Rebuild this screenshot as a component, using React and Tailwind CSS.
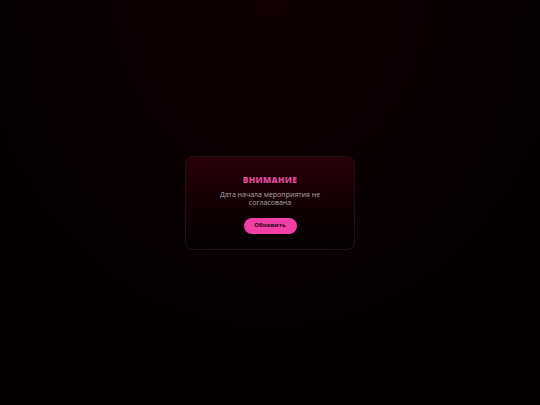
import React from 'react';

const App = () => {
  return (
    <div
      className="w-[540px] h-[405px] flex items-center justify-center bg-[radial-gradient(ellipse_60%_90%_at_50%_0%,#120003_0%,#0a0002_50%,#030001_100%)]"
      style={{ fontFamily: '"Open Sans", "DejaVu Sans", sans-serif' }}
    >
      {/* Alert card */}
      <div className="w-[170px] h-[94px] rounded-[8px] border border-[#1d1317] bg-gradient-to-b from-[#260007] to-[#040001] flex flex-col items-center pt-[17px]">
        <h2 className="text-[8.5px] leading-[11px] font-extrabold tracking-[0.3px] text-[#e0489a]">
          ВНИМАНИЕ
        </h2>
        <p className="mt-[6px] text-[7px] leading-[8px] text-[#b3a6ab] text-center px-[28px]">
          Дата начала мероприятия не согласована
        </p>
        <button className="mt-[11px] w-[53px] h-[16px] rounded-full bg-[#f23fa6] text-[6px] font-bold text-[#2a0014]">
          Обновить
        </button>
      </div>
    </div>
  );
};

export default App;
